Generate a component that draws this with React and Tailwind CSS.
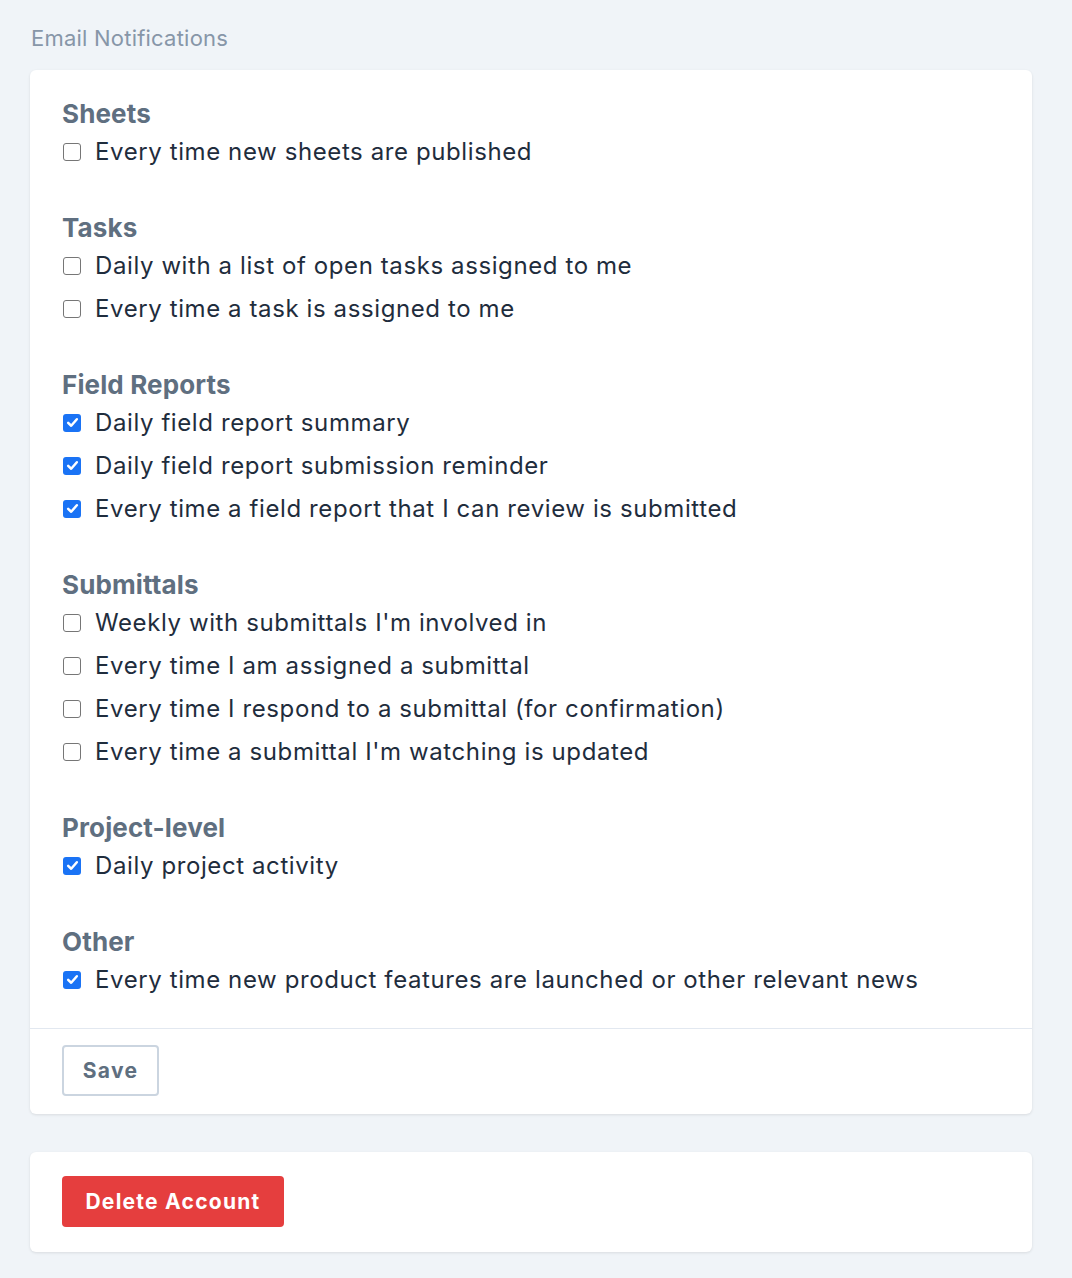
const sections = [
  { title: 'Sheets', items: [['Every time new sheets are published', false]] },
  {
    title: 'Tasks',
    items: [
      ['Daily with a list of open tasks assigned to me', false],
      ['Every time a task is assigned to me', false],
    ],
  },
  {
    title: 'Field Reports',
    items: [
      ['Daily field report summary', true],
      ['Daily field report submission reminder', true],
      ['Every time a field report that I can review is submitted', true],
    ],
  },
  {
    title: 'Submittals',
    items: [
      ["Weekly with submittals I'm involved in", false],
      ['Every time I am assigned a submittal', false],
      ['Every time I respond to a submittal (for confirmation)', false],
      ["Every time a submittal I'm watching is updated", false],
    ],
  },
  { title: 'Project-level', items: [['Daily project activity', true]] },
  {
    title: 'Other',
    items: [['Every time new product features are launched or other relevant news', true]],
  },
];

function Box({ checked }) {
  if (checked) {
    return (
      <span className="w-[18px] h-[18px] rounded-[3px] bg-[#1a73f5] flex items-center justify-center shrink-0">
        <svg width="13" height="13" viewBox="0 0 12 12" fill="none">
          <path d="M2 6.3 L4.8 9 L10 3" stroke="white" strokeWidth="2.3" strokeLinecap="round" strokeLinejoin="round" />
        </svg>
      </span>
    );
  }
  return <span className="w-[18px] h-[18px] rounded-[3px] border-[1.5px] border-[#767676] bg-white shrink-0" />;
}

export default function App() {
  return (
    <div className="min-h-[1278px] bg-[#f0f4f8] pl-[30px] pr-[40px] pt-[24px] font-['Inter',sans-serif]">
      <p className="text-[22px] leading-[28px] tracking-[0.01em] text-[#8796a8] pl-px">Email Notifications</p>

      <div className="mt-[18px] bg-white rounded-md shadow-[0_1px_3px_rgba(0,0,0,0.1)]">
        <div className="px-8 pt-[28px] pb-[27px] flex flex-col gap-[39px]">
          {sections.map((s) => (
            <div key={s.title}>
              <h3 className="text-[26px] leading-[32px] font-bold tracking-[0.005em] text-[#5f6f80]">{s.title}</h3>
              {s.items.map(([label, checked]) => (
                <label key={label} className="flex items-center gap-[14px] h-[43px] pl-px">
                  <Box checked={checked} />
                  <span className="text-[24px] tracking-[0.025em] text-[#1f2d3d]">{label}</span>
                </label>
              ))}
            </div>
          ))}
        </div>
        <div className="border-t border-[#e2e8f0] px-8 pt-4 pb-[18px]">
          <button className="h-[51px] w-[97px] rounded border-2 border-[#cbd5e0] text-[21px] font-bold tracking-[0.06em] text-[#5f6f80]">
            Save
          </button>
        </div>
      </div>

      <div className="mt-[38px] bg-white rounded-md shadow-[0_1px_3px_rgba(0,0,0,0.1)] px-8 pt-6 pb-[25px]">
        <button className="h-[51px] w-[222px] rounded bg-[#e53e3e] text-[21px] font-bold tracking-[0.06em] text-white">
          Delete Account
        </button>
      </div>
    </div>
  );
}
